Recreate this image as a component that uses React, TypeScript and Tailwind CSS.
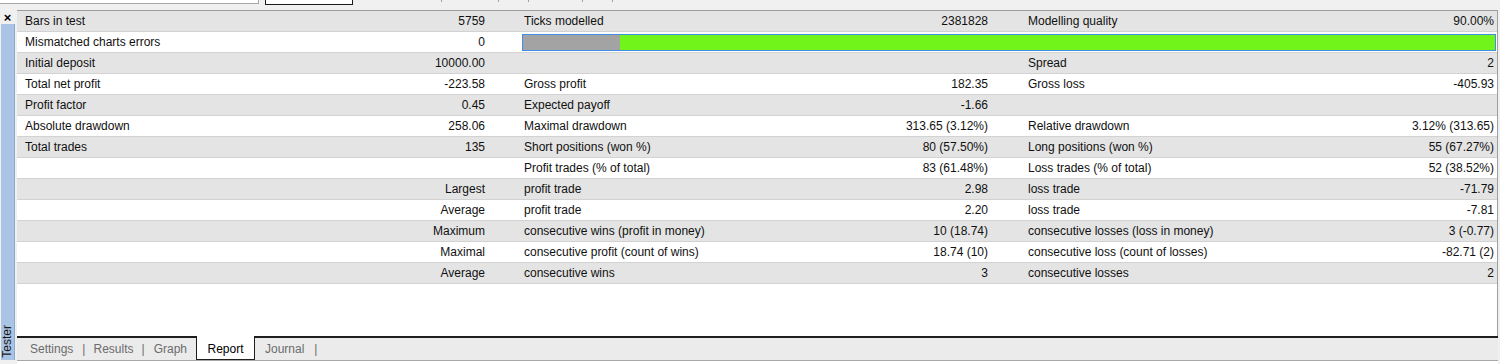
import React from "react";

type Row = {
  c: [string, string, string, string, string, string];
  bar?: boolean;
};

const rows: Row[] = [
  { c: ["Bars in test", "5759", "Ticks modelled", "2381828", "Modelling quality", "90.00%"] },
  { c: ["Mismatched charts errors", "0", "", "", "", ""], bar: true },
  { c: ["Initial deposit", "10000.00", "", "", "Spread", "2"] },
  { c: ["Total net profit", "-223.58", "Gross profit", "182.35", "Gross loss", "-405.93"] },
  { c: ["Profit factor", "0.45", "Expected payoff", "-1.66", "", ""] },
  { c: ["Absolute drawdown", "258.06", "Maximal drawdown", "313.65 (3.12%)", "Relative drawdown", "3.12% (313.65)"] },
  { c: ["Total trades", "135", "Short positions (won %)", "80 (57.50%)", "Long positions (won %)", "55 (67.27%)"] },
  { c: ["", "", "Profit trades (% of total)", "83 (61.48%)", "Loss trades (% of total)", "52 (38.52%)"] },
  { c: ["", "Largest", "profit trade", "2.98", "loss trade", "-71.79"] },
  { c: ["", "Average", "profit trade", "2.20", "loss trade", "-7.81"] },
  { c: ["", "Maximum", "consecutive wins (profit in money)", "10 (18.74)", "consecutive losses (loss in money)", "3 (-0.77)"] },
  { c: ["", "Maximal", "consecutive profit (count of wins)", "18.74 (10)", "consecutive loss (count of losses)", "-82.71 (2)"] },
  { c: ["", "Average", "consecutive wins", "3", "consecutive losses", "2"] },
];

function TableRow({ row, i }: { row: Row; i: number }) {
  const bg = i % 2 === 0 ? "bg-[#e4e4e4]" : "bg-white";
  return (
    <div
      className={`grid grid-cols-[250px_249px_234px_270px_240px_1fr] h-[21px] border-b border-[#d2d2d2] ${bg} items-center leading-[20px]`}
    >
      <div className="pl-[8px] whitespace-nowrap">{row.c[0]}</div>
      <div className="pr-[31px] text-right whitespace-nowrap">{row.c[1]}</div>
      {row.bar ? (
        <div className="col-span-4 pl-[6px] pr-[1px] flex items-center">
          <div className="flex w-full h-[17px] border border-[#3f8fe4]">
            <div className="w-[97px] h-full bg-[#a3a3a3]" />
            <div className="flex-1 h-full bg-[#70f41a]" />
          </div>
        </div>
      ) : (
        <>
          <div className="pl-[8px] whitespace-nowrap">{row.c[2]}</div>
          <div className="pr-[32px] text-right whitespace-nowrap">{row.c[3]}</div>
          <div className="pl-[8px] whitespace-nowrap">{row.c[4]}</div>
          <div className="pr-[3px] text-right whitespace-nowrap">{row.c[5]}</div>
        </>
      )}
    </div>
  );
}

export default function App() {
  return (
    <div className="w-[1500px] h-[364px] bg-[#f0f0f0] flex flex-col overflow-hidden text-[12px] text-[#101010] font-['Liberation_Sans',Arial,sans-serif]">
      {/* top cropped toolbar */}
      <div className="h-[10px] flex items-start shrink-0">
        <div className="w-[259px] h-[4px] bg-white border-b border-r border-[#a8a8a8]" />
        <div className="ml-[6px] w-[88px] h-[5px] bg-white border-x border-b border-[#1a1a1a]" />
        <div className="ml-[88px] w-px h-[2px] bg-[#a0a0a0]" />
        <div className="ml-[56px] w-px h-[2px] bg-[#a0a0a0]" />
        <div className="ml-[29px] w-px h-[2px] bg-[#a0a0a0]" />
        <div className="ml-[53px] w-px h-[2px] bg-[#a0a0a0]" />
        <div className="ml-[29px] w-px h-[2px] bg-[#a0a0a0]" />
      </div>
      <div className="flex flex-1 min-h-0">
        {/* sidebar */}
        <div className="w-[17px] shrink-0 flex flex-col">
          <div className="h-[14px] flex items-center justify-center pr-[2px] text-[13px] font-bold leading-none text-black">
            ×
          </div>
          <div className="ml-[1px] w-[14px] flex-1 bg-[#a9c4e4] border-r border-[#8ea8c8] flex flex-col justify-end items-center pb-[2px]">
            <span className="[writing-mode:vertical-rl] rotate-180 text-[12px] leading-[13px] text-[#1a1a1a]">
              Tester
            </span>
          </div>
          <div className="h-[4px]" />
        </div>
        {/* main */}
        <div className="w-[1481px] flex flex-col border-t border-[#9c9c9c]">
          <div className="flex-1 bg-white border-r border-[#a0a0a0] flex flex-col">
            {rows.map((r, i) => (
              <TableRow key={i} row={r} i={i} />
            ))}
          </div>
          {/* tabs */}
          <div className="h-[25px] shrink-0 border-t-2 border-[#1e1e1e] bg-[#ebebeb] flex items-start text-[#6b6b6b] border-b border-b-[#a8a8a8]">
            <span className="ml-[13px] mt-[2px]">Settings</span>
            <span className="ml-[9px] mt-[2px]">|</span>
            <span className="ml-[8px] mt-[2px]">Results</span>
            <span className="ml-[8px] mt-[2px]">|</span>
            <span className="ml-[9px] mt-[2px]">Graph</span>
            <div className="ml-[9px] -mt-[2px] h-[24px] w-[59px] bg-white border-x border-b border-[#1e1e1e] flex justify-center pt-[4px] text-black">
              Report
            </div>
            <span className="ml-[10px] mt-[2px]">Journal</span>
            <span className="ml-[10px] mt-[2px]">|</span>
          </div>
          <div className="h-[3px] bg-white" />
        </div>
      </div>
    </div>
  );
}
